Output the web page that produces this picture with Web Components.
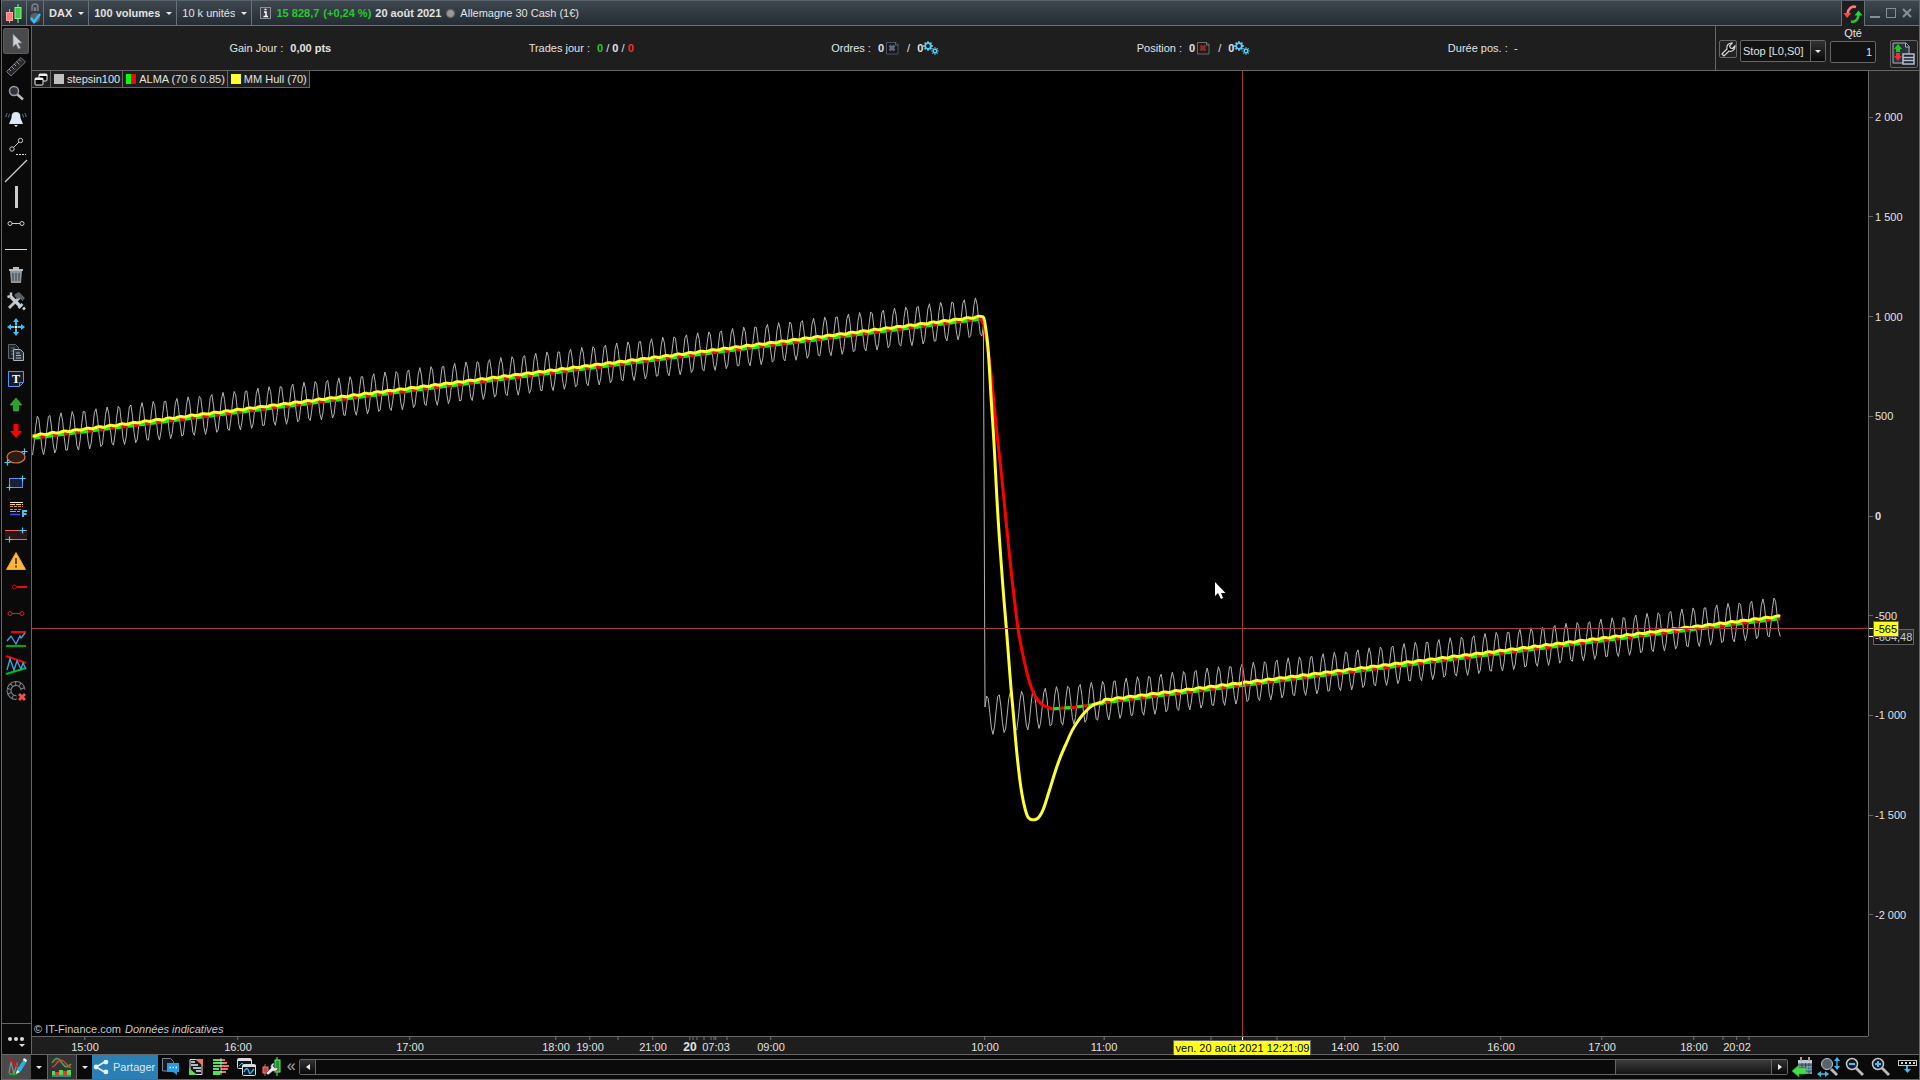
<!DOCTYPE html>
<html lang="fr">
<head>
<meta charset="utf-8">
<title>DAX - 100 volumes</title>
<style>
    html, body {
        margin: 0;
        height: 100%;
        background: #000;
    }

    body {
        font: 11px/14px "Liberation Sans", Arial, sans-serif;
        color: #e2e2e2;
        --line: #666;
        --panel: #1e1e1e;
        --rail: #0a0a0a;
    }
</style>
</head>
<body>
<trading-window>
    <title-bar slot="title"></title-bar>
    <tool-rail slot="rail"></tool-rail>
    <info-bar slot="info"></info-bar>
    <price-chart slot="chart">
        <legend-item colors="#c0c0c0">stepsin100</legend-item>
        <legend-item colors="#00ff00,#ff0000">ALMA (70 6 0.85)</legend-item>
        <legend-item colors="#ffff33">MM Hull (70)</legend-item>
    </price-chart>
    <price-axis slot="prices"></price-axis>
    <time-axis slot="times"></time-axis>
    <bottom-bar slot="bottom"></bottom-bar>
</trading-window>

<script>
// Icons, drawn on a 26x26 box unless a viewBox is given
const plus = (x, y) => `<path d="M${x - 3} ${y}h6M${x} ${y - 3}v6" stroke="#4cf" stroke-width="1.2"/>`;

const gearTeeth = (x, y, r, n) => {
    let d = '';
    for (let i = 0; i < n; i++) {
        const a = i * 2 * Math.PI / n;
        d += `M${x + r * Math.cos(a)} ${y + r * Math.sin(a)}L${x + (r + 2) * Math.cos(a)} ${y + (r + 2) * Math.sin(a)}`;
    }
    return `<circle cx="${x}" cy="${y}" r="${r}"/><path d="${d}"/>`;
};

const ICONS = {
    candles: `<path d="M5.500 8v14" stroke="#ff8f8f"/><rect x="2.500" y="11.500" width="6" height="8" fill="#f87c7c" stroke="#ffa0a0"/>
        <path d="M14 3v19" stroke="#7f7"/><rect x="11" y="6.500" width="6" height="11" fill="#3fc94b" stroke="#8bf58b"/>`,
    link: `<path d="M5 10V6a3 3 0 0 1 6 0v4M7.500 10V7h1v3" stroke="#7b8288" stroke-width="1.500"/>
        <circle cx="8" cy="17" r="5" fill="#59636b"/><path d="M4 17l3 4 6-8" stroke="#35bfff" stroke-width="2.400"/>`,
    info: `<rect x="1.500" y="1.500" width="10" height="11" fill="#3e4045" stroke="#8b8e94"/><path d="M5 6h2v4.500M4.500 10.500h4.500M5.500 3.500h2" stroke="#fff" stroke-width="1.500"/>`,
    refresh: `<path d="M13 3C8.500 1.500 5 5 4.500 10" stroke="#ff7777" stroke-width="2.600"/><path d="M.5 9h8L4 14z" fill="#f44"/>
        <path d="M8 17.500c4.500 1 7.500-2 7.500-7" stroke="#28c33c" stroke-width="2.600"/><path d="M11.500 11.500h8l-4-5z" fill="#1bdd31"/>`,
    min: `<path d="M1 10h10" stroke="#888e95" stroke-width="2"/>`,
    max: `<rect x="1.500" y="1.500" width="9" height="9" stroke="#888e95"/>`,
    close: `<path d="M2 2l8 8M10 2l-8 8" stroke="#888e95" stroke-width="2"/>`,
    caret: `<path d="M0 0h6l-3 3z" fill="#e8e8e8"/>`,
    cancel: `<path d="M.5 .5h9.500l2 2v9.500H.5z" fill="#15181c" stroke="#4b535e"/><path d="M9.500 .5v2.500h3" stroke="#606870"/><path d="M3.500 3.500l5 5M8.500 3.500l-5 5" stroke="#626a76" stroke-width="2.600"/>`,
    cancelRed: `<path d="M.5 .5h9.500l2 2v9.500H.5z" fill="#201a1a" stroke="#6a6a6a"/><path d="M9.500 .5v2.500h3" stroke="#777"/><path d="M3.500 3.500l5 5M8.500 3.500l-5 5" stroke="#8c2a2a" stroke-width="2.600"/>`,
    gears: `<g stroke="#5cc8f2" stroke-width="1.800">${gearTeeth(5, 5, 2.8, 8)}</g><g stroke="#5cc8f2" stroke-width="1.200">${gearTeeth(12, 10, 1.7, 8)}</g>`,
    wrench: `<path d="M2 13l5-5C6 4 9 2 12 2L9.500 5l1 2 2 .5L15 5c0 4-3 6-6 5l-5 5z" fill="#080808" stroke="#ddd" stroke-width="1.200"/>`,
    orders: `<path d="M1 1h13l3 3v17H1z" fill="#2b333d" stroke="#aab5c2"/><path d="M13.500 1v4h4" fill="#141a20" stroke="#aab5c2"/>
        <path d="M6 2l4 5H8v3H4V7H2z" fill="#1ec71e"/><path d="M6 19l4-5H8v-3H4v3H2z" fill="#f03030"/>
        <path d="M11 12h11v10H11z" fill="#1c2630" stroke="#b5c0cc" stroke-width="1.500"/><path d="M11 15.500h11M11 18.500h11" stroke="#b5c0cc" stroke-width="1.500"/>`,
    windows: `<rect x="5" y="1" width="8" height="7" rx="1" fill="#000" stroke="#eee"/><path d="M5 2h8" stroke="#eee" stroke-width="2"/>
        <rect x="1" y="5" width="8" height="7" rx="1" fill="#000" stroke="#eee"/><path d="M1 6h8" stroke="#eee" stroke-width="2"/>`,

    cursor: `<path d="M10 6v13l3-3 2.500 5 2-1-2.500-5h4z" fill="#ccd3d8" stroke="#777f86" stroke-width=".8"/>`,
    ruler: `<path d="M3.500 17.500L18 3.500l4.500 4.500L8 22z" fill="#24262a" stroke="#777b82"/><path d="M6 15l2 2M8.500 12.500l3 3M11 10l2 2M13.500 7.500l3 3M16 5.500l2 2" stroke="#999"/>`,
    search: `<circle cx="11" cy="11" r="4.500" fill="#30343a" stroke="#9aa0a6" stroke-width="1.500"/><path d="M14.500 14.500l5.500 5" stroke="#bbb" stroke-width="2.500"/>`,
    bell: `<path d="M13 6c-4 0-4.500 3-4.500 6L6 18h14l-2.500-6c0-3-.5-6-4.500-6zM11 19h4l-2 2z" fill="#dfe9f5"/><path d="M7 8c-1 1-1.500 2-1.500 3.500M4.500 7C3.500 8 3 9 3 11M19 8c1 1 1.500 2 1.500 3.500M21.500 7c1 1 1.500 2 1.500 4" stroke="#6b8598"/>`,
    segment: `<circle cx="9" cy="17" r="2.200" stroke="#ccc"/><circle cx="17.500" cy="8.500" r="2.200" stroke="#ccc"/><path d="M10.500 15.500l5.500-5.500" stroke="#ccc"/><path d="M13 22.500h10" stroke="#ddd" stroke-dasharray="2 1"/>`,
    line: `<path d="M2 24L24 2" stroke="#ccc" stroke-width="1.200"/>`,
    vbar: `<path d="M13.500 2v22" stroke="#ccc" stroke-width="3"/>`,
    hseg: `<circle cx="7" cy="13.500" r="2" stroke="#ccc"/><circle cx="19" cy="13.500" r="2" stroke="#ccc"/><path d="M9 13.500h8" stroke="#ccc"/>`,
    hline: `<path d="M2 13.500h22" stroke="#ddd"/>`,
    trash: `<path d="M7 9h12l-1 12H8z" fill="#8d969c"/><path d="M6 8h14M10 6h6" stroke="#b6bec4" stroke-width="2"/><path d="M10 11v8M13 11v8M16 11v8" stroke="#4a5055" stroke-width="1.300"/>`,
    tools: `<path d="M6 20l11-11" stroke="#b9c0c6" stroke-width="3"/><path d="M12 6l4-2 6 6-2.500 3-3-3-2 1-3-3z" fill="#586068"/><path d="M8 9l10 10" stroke="#c4ccd2" stroke-width="3.500"/><path d="M8 4.500v3.500l-3.500 1M15.500 20l4-4M20 21.500l2-2" stroke="#c4ccd2" stroke-width="2.500"/>`,
    move: `<path d="M13 4l3 4h-2v3h-2V8h-2zM13 22l3-4h-2v-3h-2v3h-2zM4 13l4-3v2h3v2H8v2zM22 13l-4-3v2h-3v2h3v2z" fill="#36c4f5"/><circle cx="13" cy="13" r="1.500" fill="#fff"/>`,
    copy: `<path d="M5.500 4.500h7l3 3v11h-10z" fill="#20252b" stroke="#5f6770"/><path d="M8 8h4M8 11h3M8 14h3" stroke="#6a727a"/><path d="M10.500 9.500h7l3 3v8h-10z" fill="#2c343e" stroke="#aab4bd"/><path d="M13 13h4M13 15.500h5M13 18h5" stroke="#aab4bd"/>`,
    text: `<path d="M5.500 5.500h15v11l-4 4h-11zM16.500 20v-3.500H20" fill="#171c26" stroke="#5f92ff"/><text x="13" y="17" text-anchor="middle" font-family="Liberation Serif, serif" font-size="12" font-weight="bold" fill="#fff">T</text>`,
    up: `<path d="M13 6l6 7h-3.500v6h-5v-6H7z" fill="#29a329" stroke="#45bd45" stroke-width=".6"/>`,
    down: `<path d="M13 20l6-7h-3.500V6h-5v7H7z" fill="#f00"/>`,
    ellipse: `<ellipse cx="13" cy="13" rx="9" ry="6" fill="#2e1c14" stroke="#dc7748" stroke-width="1.200"/>${plus(4.5, 18.5)}${plus(21.5, 7.5)}`,
    rect: `<rect x="6.500" y="8.500" width="13" height="9" fill="#1a2038" stroke="#6a8cf0"/>${plus(6.5, 17.5)}${plus(19.5, 8.5)}`,
    fibo: `<path d="M7 6.500h13" stroke="#eee"/><path d="M7 8.500h13" stroke="#ffe13c" stroke-dasharray="5 1"/><path d="M7 10.500h13M7 13.500h12" stroke="#e88234" stroke-dasharray="3 1"/><path d="M7 15.500h10" stroke="#aaa" stroke-dasharray="6 1"/><path d="M7 18.500h10" stroke="#3b4cff" stroke-width="1.500"/><path d="M20 21v-6h4M20 18h3.500" stroke="#4cf" stroke-width="1.800"/>`,
    channel: `<path d="M2 8.500h22v9H2z" fill="#2b1717"/><path d="M2 8.500h22M2 17.500h22" stroke="#e96565"/>${plus(6.5, 17.5)}${plus(19.5, 8.5)}`,
    warn: `<path d="M13 4.500l9.500 17h-19z" fill="#ffb837" stroke="#f7a61b" stroke-linejoin="round"/><path d="M13 10v6M13 17.500v2" stroke="#6a4200" stroke-width="2"/>`,
    ray: `<circle cx="11.500" cy="13" r="2" stroke="#d00"/><path d="M14 13h10" stroke="#f00" stroke-width="2"/>`,
    redseg: `<circle cx="7" cy="13.500" r="2" stroke="#d22"/><circle cx="19" cy="13.500" r="2" stroke="#d22"/><path d="M9 13.500h8" stroke="#d22"/>`,
    support: `<path d="M8 6h15" stroke="#f00" stroke-width="2"/><path d="M3 20h20" stroke="#0a0" stroke-width="2"/><path d="M4 15l4-5 5 8 4-8 1 2 4-5" stroke="#3cabe6" stroke-width="1.300"/>`,
    wedge: `<path d="M3 4l20 7" stroke="#f00" stroke-width="2"/><path d="M3 22l20-6" stroke="#0b2" stroke-width="2"/><path d="M4 18l3-11 4 11 3-9 4 8 2-6 3 6" stroke="#3cabe6" stroke-width="1.300"/>`,
    magnet: `<path d="M13.500 19.500A7 7 0 1 1 20 12" stroke="#80858a" stroke-width="5"/><path d="M13.500 19.500A7 7 0 1 1 20 12" stroke="#101214" stroke-width="3" stroke-dasharray="3.500 1"/><path d="M16 16l6 6M22 16l-6 6" stroke="#f35050" stroke-width="2.800"/>`,
    dots: `<circle cx="7" cy="13" r="2" fill="#ddd"/><circle cx="13" cy="13" r="2" fill="#ddd"/><circle cx="19" cy="13" r="2" fill="#ddd"/><path d="M16 18h6l-3 3z" fill="#ddd"/>`,

    draw: `<path d="M5 19L7 8l3 12 3-10 2 8" stroke="#8b8b8b" stroke-width="1.200"/><path d="M5 4l9 9" stroke="#f00" stroke-width="1.500"/><path d="M5 20h8" stroke="#0c0" stroke-width="1.500"/><path d="M12 19l2-5 6-9 3 2-6 10z" fill="#25b4ec"/><path d="M19 6l3 2 1-2-3-2zM12 20l1-4 3 2z" fill="#fff"/>`,
    indicators: `<path d="M3 9c4-7 7-5 10 0s6 5 9 1" fill="#663030" stroke="#31b34c" stroke-width="1.500"/><path d="M3 13c4 0 5-7 9-7s6 7 10 8" stroke="#e44" stroke-width="1.200"/><path d="M3 21v-4h3v4M10 21v-5h4v5M18 21v-5h4v5" fill="#4be04b"/><path d="M6 21v-3h4v3M14 21v-4h4v4" fill="#e33"/><path d="M3 22h19" stroke="#3bdcf5"/>`,
    share: `<path d="M18 6L6 13l12 7" stroke="#e8f0f5" stroke-width="2"/><circle cx="18" cy="7" r="3" fill="#e8f0f5"/><circle cx="6" cy="13" r="3" fill="#e8f0f5"/><circle cx="18" cy="19" r="3" fill="#e8f0f5"/>`,
    chat: `<path d="M4.500 4.500h8l3 3V17h-11z" fill="#161b22" stroke="#7b8693"/><path d="M9 9h12v9h-2v3l-4-3H9z" fill="#269be6"/><path d="M11.500 13.500h1.500M14.500 13.500h1.500M17.500 13.500h1.500" stroke="#fff" stroke-width="1.500"/>`,
    report: `<path d="M7 5.500h12v15H7z" fill="#16191c" stroke="#ddd"/><path d="M12 5h8v7z" fill="#f07474"/><path d="M6 14v7h8z" fill="#62d962"/><path d="M8 8h4M8 11h7M10 14h8M13 17h5" stroke="#eee" stroke-width="1.500"/>`,
    depth: `<path d="M5 6h8M5 9h11M5 12h8M5 15h6M5 18h9M5 20h7" stroke="#53df5a" stroke-width="2"/><path d="M13 6h4M16 9h3M13 12h8M13 15h7M14 18h4" stroke="#f26e6e" stroke-width="2"/><path d="M13 4v17" stroke="#eee" stroke-width=".7"/>`,
    panels: `<rect x="4.500" y="4.500" width="14" height="10" rx="1" fill="#101820" stroke="#ddd"/><path d="M5 6h13" stroke="#ddd" stroke-width="2"/><path d="M6 12l3-3 3 3" stroke="#3bbdf0"/><rect x="9.500" y="10.500" width="13" height="11" rx="1" fill="#101820" stroke="#ddd"/><path d="M10 12h13" stroke="#ddd" stroke-width="2"/><path d="M11 18c2-5 4-4 5 0s3-1 5-3" stroke="#3bbdf0" stroke-width="1.300"/>`,
    backtest: `<path d="M7 10v12" stroke="#d55"/><rect x="5" y="13" width="5" height="6" fill="#c44" stroke="#f77"/><path d="M19 3v19" stroke="#6e6"/><rect x="17" y="6" width="5" height="12" fill="#1c9c2e" stroke="#6e6"/><path d="M8 19l5-5c-1-3 1-5 4-5l-2 3 2 2 3-1c0 3-2 5-5 4l-5 4z" fill="#e8e8e8" stroke="#333" stroke-width=".6"/>`,
    left: `<path d="M7 0v6L3 3z" fill="#eee"/>`,
    right: `<path d="M3 0v6l4-3z" fill="#eee"/>`,
    calendar: `<path d="M8 6h14v14H8z" fill="#8394a8"/><path d="M8 6h14v3H8z" fill="#c0cad6"/><path d="M11 3v4M19 3v4" stroke="#b99" stroke-width="2"/><path d="M8 11h14M8 14h14M8 17h14M12 9v11M15.500 9v11M19 9v11" stroke="#37424f"/><path d="M17 13h3v3h-3z" stroke="#3cf"/><path d="M2 17l7-6v3h7v6H9v3z" fill="#46dc46" stroke="#2db12d" stroke-width=".6"/>`,
    fit: `<circle cx="11" cy="10" r="5.500" fill="#59636c" stroke="#c4cace"/><path d="M15 15l6 6" stroke="#bbb" stroke-width="2.800"/><path d="M21 5v9M3 20h8" stroke="#38bdf0" stroke-width="1.300"/><path d="M18 7l3-4 3 4zM18 12l3 4 3-4zM5 17l-4 3 4 3zM9 17l4 3-4 3z" fill="#38bdf0"/>`,
    zoomOut: `<circle cx="10" cy="10" r="5.500" fill="#101820" stroke="#c4cace" stroke-width="1.500"/><path d="M14 14l7 7" stroke="#bbb" stroke-width="2.800"/><path d="M7 10h6" stroke="#38c4ff" stroke-width="2"/>`,
    zoomIn: `<circle cx="10" cy="10" r="5.500" fill="#101820" stroke="#c4cace" stroke-width="1.500"/><path d="M14 14l7 7" stroke="#bbb" stroke-width="2.800"/><path d="M7 10h6M10 7v6" stroke="#38c4ff" stroke-width="2"/>`,
    dock: `<rect x="4.500" y="6.500" width="18" height="5" stroke="#ccc"/><path d="M7 9h2M11 9h2M15 9h2M19 9h2" stroke="#ddd" stroke-width="2"/><path d="M13 12v4" stroke="#38bdf0" stroke-width="2"/><path d="M10 15h7l-3.500 4z" fill="#38bdf0"/>`
};

const icon = (name, w = 26, h = w) =>
    `<svg width="${w}" height="${h}" viewBox="0 0 ${w} ${h}" fill="none" aria-hidden="true">${ICONS[name]}</svg>`;

const define = (name, render) => customElements.define(name, class extends HTMLElement {
    constructor() {
        super();
        this.attachShadow({ mode: 'open' });
    }

    connectedCallback() {
        this.shadowRoot.innerHTML = render(this);
    }
});

const BASE = `
    :host, * { box-sizing: border-box; }
    svg { display: block; flex: none; }
    button, select, input { font: inherit; color: inherit; margin: 0; padding: 0; border: 0; background: none; border-radius: 0; }
    select { appearance: none; field-sizing: content; outline: none; }
    option { background: #1e1e1e; }
    button { display: flex; align-items: center; justify-content: center; }
`;

define('trading-window', () => `
    <style>${BASE}
        :host {
            display: grid;
            min-height: 100vh;
            margin-left: 1px;
            border: 1px solid #666;
            border-top-color: #59636b;
            grid-template: auto auto 1fr auto auto / auto 1fr auto;
            grid-template-areas:
                "title title title"
                "rail info info"
                "rail chart prices"
                "rail times corner"
                "bottom bottom bottom";
        }
        slot { display: grid; }
        slot[name=title] { grid-area: title; }
        slot[name=rail] { grid-area: rail; }
        slot[name=info] { grid-area: info; }
        slot[name=chart] { grid-area: chart; }
        slot[name=prices] { grid-area: prices; }
        slot[name=times] { grid-area: times; }
        slot[name=bottom] { grid-area: bottom; min-width: 0; }
        .corner { grid-area: corner; background: var(--panel); }
    </style>
    <slot name="title"></slot>
    <slot name="rail"></slot>
    <slot name="info"></slot>
    <slot name="chart"></slot>
    <slot name="prices"></slot>
    <slot name="times"></slot>
    <div class="corner"></div>
    <slot name="bottom"></slot>
`);

define('menu-select', el => `
    <style>${BASE}
        :host { display: grid; align-items: center; border-right: 1px solid #68727b; }
        select, svg { grid-area: 1 / 1; }
        select { height: 24px; padding: 0 16px 0 5px; }
        svg { justify-self: end; margin-right: 4px; pointer-events: none; }
    </style>
    <select aria-label="${el.getAttribute('label')}"><option>${el.getAttribute('value')}</option></select>
    ${icon('caret', 6, 3)}
`);

define('title-bar', () => `
    <style>${BASE}
        :host {
            display: flex;
            height: 25px;
            background: linear-gradient(#3e474f, #252c33);
            border-bottom: 1px solid #68727b;
        }
        .cell { display: flex; align-items: center; border-right: 1px solid #68727b; }
        .logo { width: 25px; justify-content: center; }
        .link { width: 17px; }
        .bold { font-weight: bold; }
        .quote { display: flex; align-items: center; gap: 4px; padding-left: 7px; }
        .up { color: #25c92b; font-weight: bold; }
        .dot { width: 9px; height: 9px; margin: 0 1px; border-radius: 50%; background: #999; border: 1px solid #666; }
        .refresh { width: 24px; height: 25px; margin-left: auto; background: var(--panel); border: solid #68727b; border-width: 0 1px; }
        .wm { display: flex; align-items: center; gap: 4px; padding: 0 6px 0 4px; }
    </style>
    <div class="cell logo">${icon('candles', 20, 24)}</div>
    <div class="cell link">${icon('link', 16, 24)}</div>
    <menu-select class="bold" label="Valeur" value="DAX"></menu-select>
    <menu-select class="bold" label="Unité de temps" value="100 volumes"></menu-select>
    <menu-select label="Historique" value="10 k unités"></menu-select>
    <div class="quote">
        ${icon('info', 13, 14)}
        <span class="up">15 828,7</span>
        <span class="up">(+0,24 %)</span>
        <span class="bold">20 août 2021</span>
        <span class="dot"></span>
        <span>Allemagne 30 Cash (1€)</span>
    </div>
    <button class="refresh" aria-label="Actualiser">${icon('refresh', 20, 20)}</button>
    <div class="wm">
        <button aria-label="Réduire">${icon('min', 12)}</button>
        <button aria-label="Agrandir">${icon('max', 12)}</button>
        <button aria-label="Fermer">${icon('close', 12)}</button>
    </div>
`);

define('info-bar', () => `
    <style>${BASE}
        :host { display: flex; height: 45px; background: var(--panel); border-bottom: 1px solid var(--line); }
        .stats { flex: 1; display: flex; align-items: center; justify-content: space-evenly; }
        .stat { display: flex; align-items: center; gap: 4px; white-space: pre; }
        b { display: inline-flex; align-items: center; }
        .green { color: #25c92b; }
        .red { color: #ff2b2b; }
        .x { margin: 0 4px 0 -2px; }
        .g { margin-left: -4px; }
        .order { display: flex; align-items: flex-start; padding: 0 1px 0 3px; border-left: 1px solid var(--line); }
        .tool, .combo, .big { margin-top: 14px; border: 1px solid #666; border-radius: 2px; background: #222; }
        .tool { width: 18px; height: 18px; }
        .combo { display: grid; width: 86px; height: 22px; margin-left: 3px; margin-right: 4px; background: #121212; align-items: center; }
        .combo > * { grid-area: 1 / 1; }
        .combo select { height: 20px; padding-left: 2px; }
        .arrow { justify-self: end; display: grid; place-items: center; width: 15px; height: 20px; border-left: 1px solid #666; background: linear-gradient(#333, #080808); pointer-events: none; }
        .qty { display: flex; flex-direction: column; width: 46px; text-align: center; }
        .qty label { line-height: 15px; }
        .qty input { width: 100%; height: 22px; padding-right: 3px; border: 1px solid #666; border-radius: 2px; background: #121212; text-align: right; }
        .big { width: 28px; height: 28px; margin-left: 14px; }
    </style>
    <div class="stats">
        <div class="stat">Gain Jour : <b>0,00 pts</b></div>
        <div class="stat">Trades jour : <span><b class="green">0</b> / <b>0</b> / <b class="red">0</b></span></div>
        <div class="stat">Ordres : <b>0</b><button class="x" aria-label="Annuler les ordres">${icon('cancel', 13)}</button>/ <b>0</b><button class="g" aria-label="Ordres automatiques">${icon('gears', 16, 14)}</button></div>
        <div class="stat">Position : <b>0</b><button class="x" aria-label="Fermer la position">${icon('cancelRed', 13)}</button>/ <b>0</b><button class="g" aria-label="Positions automatiques">${icon('gears', 16, 14)}</button></div>
        <div class="stat">Durée pos. :  -</div>
    </div>
    <div class="order">
        <button class="tool" aria-label="Configurer">${icon('wrench', 17)}</button>
        <div class="combo">
            <select aria-label="Type de stop"><option>Stop [L0,S0]</option></select>
            <span class="arrow">${icon('caret', 6, 3)}</span>
        </div>
        <div class="qty">
            <label for="qty">Qté</label>
            <input id="qty" value="1">
        </div>
        <button class="big" aria-label="Carnet d'ordres">${icon('orders', 24)}</button>
    </div>
`);

const TOOLS = [
    ['cursor', 'Curseur'], ['ruler', 'Règle'], ['search', 'Loupe'], ['bell', 'Alerte'], ['segment', 'Segment'],
    ['line', 'Droite'], ['vbar', 'Verticale'], ['hseg', 'Segment horizontal'], ['hline', 'Horizontale'],
    ['trash', 'Supprimer'], ['tools', 'Propriétés'], ['move', 'Déplacer'], ['copy', 'Dupliquer'], ['text', 'Texte'],
    ['up', 'Flèche haut'], ['down', 'Flèche bas'], ['ellipse', 'Ellipse'], ['rect', 'Rectangle'], ['fibo', 'Fibonacci'],
    ['channel', 'Canal'], ['warn', 'Avertissement'], ['ray', 'Demi-droite'], ['redseg', 'Segment rouge'],
    ['support', 'Supports'], ['wedge', 'Triangles'], ['magnet', 'Aimant']
];

define('tool-rail', () => `
    <style>${BASE}
        :host { display: flex; flex-direction: column; width: 30px; padding-top: 2px; background: var(--rail); border-right: 1px solid var(--line); }
        button { height: 26px; padding-right: 1px; }
        .on { width: 26px; margin-left: 1px; padding: 0; background: #4a4a4a; border: 1px solid #5c5c5c; border-radius: 2px; }
        .more { height: 31px; margin-top: auto; border-top: 1px solid var(--line); }
    </style>
    ${TOOLS.map(([name, label], i) => `<button${i ? '' : ' class="on"'} aria-label="${label}">${icon(name)}</button>`).join('')}
    <button class="more" aria-label="Plus d'outils">${icon('dots')}</button>
`);

define('legend-item', el => {
    const colors = el.getAttribute('colors').split(',');
    return `
    <style>
        :host { display: flex; align-items: center; gap: 3px; padding: 0 2px 0 3px; border-right: 1px solid var(--line); background: var(--panel); }
        .swatch { display: flex; width: 10px; height: 10px; }
        i { flex: 1; }
    </style>
    <span class="swatch">${colors.map(c => `<i style="background:${c}"></i>`).join('')}</span>
    <slot></slot>`;
});

// Plot space: 1836 x 965, one bar every 1.5875 units
const PLOT_W = 1836;
const PLOT_H = 965;
const BAR = 1.5875;
const PERIOD = 11.578;
const STEP = 600;
const LAST = 1101;
const priceY = v => 445 - v * 0.1994;
const trend = i => i < STEP ? 400 + i : (i - STEP) * 0.988 - 1000;
const wave = x => Math.cos((x - 5.7) / PERIOD * 2 * Math.PI);

const HULL_DROP = [
    [951.7, 246], [953.3, 253.6], [956.3, 277], [959, 327], [962, 370], [965.3, 437], [969.3, 495], [972, 530],
    [974.7, 561], [977, 592], [979.2, 620], [981.7, 646], [984, 674], [986.5, 698], [988.7, 716], [991.5, 732],
    [995, 745], [998, 748.500], [1001.7, 749], [1005, 748], [1007.3, 746], [1011.3, 739], [1016, 724],
    [1020, 711], [1024, 698], [1029, 684], [1035, 671], [1040, 659], [1048, 647], [1055, 638.6], [1062, 633],
    [1071, 631]
];
const ALMA_DROP = [
    [949, 248], [952.3, 255], [956, 279], [960, 311], [964.3, 357], [969.7, 405], [975.3, 463], [979, 499],
    [982.3, 528], [986.3, 561], [990.7, 583], [995, 603], [1001.3, 623], [1008.7, 633], [1014.7, 636], [1021, 638]
];
const ALMA_BASE = [[1020, 638], [1031, 637], [1041, 636.5], [1051, 635], [1063, 633.5], [1072, 632.500]];

const between = (pts, x) => {
    const k = pts.findIndex(p => p[0] >= x);
    const [a, b] = [pts[k - 1], pts[k]];
    return a[1] + (b[1] - a[1]) * (x - a[0]) / (b[0] - a[0]);
};

const point = p => p[0].toFixed(2) + ' ' + p[1].toFixed(2);
const polyline = pts => 'M' + pts.map(point).join('L');

// Quadratic curve through the midpoints
function smooth(pts) {
    let d = 'M' + point(pts[0]);
    for (let i = 1; i < pts.length - 1; i++) {
        const [a, b] = [pts[i], pts[i + 1]];
        d += 'Q' + point(a) + ' ' + point([(a[0] + b[0]) / 2, (a[1] + b[1]) / 2]);
    }
    return d + 'L' + point(pts.at(-1));
}

function buildSeries() {
    const price = [], hull = [], alma = [];
    let green = '', pen = false;
    for (let i = 0; i <= LAST; i++) {
        const x = 0.5 + i * BAR;
        const y = priceY(trend(i));
        price.push([x, y - 19.94 * wave(x)]);

        if (x < 951 || x > 1071) hull.push([x, y - 0.6 + 0.6 * Math.sin(x / PERIOD * 2 * Math.PI)]);
        else if (hull.at(-1)[0] < 951) hull.push(...HULL_DROP);

        let ay = null;
        if (x < 949 || x > 1071) ay = y + 2;
        else if (x > 1021) ay = between(ALMA_BASE, x);
        else if (alma.at(-1)[0] < 949) alma.push(...ALMA_DROP);
        if (ay !== null) alma.push([x, ay]);

        if (ay !== null && wave(x) > -0.6) {
            green += (pen ? 'L' : 'M') + point([x, ay]);
            pen = true;
        } else {
            pen = false;
        }
    }
    return { price: polyline(price), hull: smooth(hull), alma: smooth(alma), green };
}

define('price-chart', () => {
    const s = buildSeries();
    return `
    <style>${BASE}
        :host { display: grid; contain: size; background: #000; overflow: hidden; }
        .plot, .legend, .credit { grid-area: 1 / 1; }
        .plot { width: 100%; height: 100%; min-height: 0; }
        .legend { display: flex; place-self: start; height: 17px; border-bottom: 1px solid var(--line); }
        .legend button { width: 19px; background: var(--panel); border-right: 1px solid var(--line); }
        .credit { place-self: end start; padding-left: 2px; color: #ccc; }
        .credit i { margin-left: 1px; }
    </style>
    <svg class="plot" viewBox="0 0 ${PLOT_W} ${PLOT_H}" preserveAspectRatio="none" fill="none">
        <path d="${s.price}" stroke="#b4b4b4" stroke-width="1"/>
        <path d="${s.alma}" stroke="#ff0000" stroke-width="3" stroke-linejoin="round"/>
        <path d="${s.green}" stroke="#00ff00" stroke-width="3"/>
        <path d="${s.hull}" stroke="#ffff33" stroke-width="3" stroke-linejoin="round"/>
        <path d="M0 557.500H1836M1210.500 0V965" stroke="#a83a3a" stroke-width="1"/>
        <path d="M1183 511v14l3-3 3 6 2-1-2-5h4.500z" fill="#fff"/>
    </svg>
    <div class="legend">
        <button aria-label="Détacher">${icon('windows', 14, 13)}</button>
        <slot></slot>
    </div>
    <div class="credit">© IT-Finance.com <i>Données indicatives</i></div>`;
});

const PRICES = [2000, 1500, 1000, 500, 0, -500, -1000, -1500, -2000];
const formatPrice = v => String(v).replace(/(\d)(\d{3})$/, '$1 $2');
const atPrice = v => `top:${(priceY(v) / PLOT_H * 100).toFixed(3)}%`;

// Labels lie on the scale at the height of their value
define('price-axis', () => `
    <style>${BASE}
        :host { display: block; position: relative; width: 51px; background: var(--panel); border-left: 1px solid var(--line); }
        .mark { position: absolute; left: 0; display: flex; align-items: center; gap: 2px; transform: translateY(-50%); white-space: nowrap; }
        .mark::before { content: ""; width: 4px; height: 1px; background: var(--line); }
        .zero { font-weight: bold; }
        .tag { gap: 0; }
        .tag::before { background: #eee; }
        .tag span { padding: 0 1px; border: 1px solid #666; background: linear-gradient(#333, #111); color: #ccc; }
        .cross span { background: #ffff19; color: #000; }
    </style>
    ${PRICES.map(v => `<div class="mark${v ? '' : ' zero'}" style="${atPrice(v)}">${formatPrice(v)}</div>`).join('')}
    <div class="mark tag" style="${atPrice(-604.48)}"><span>-604,48</span></div>
    <div class="mark tag cross" style="${atPrice(-565)}"><span>-565</span></div>
`);

const TIMES = [
    [53, '15:00'], [206, '16:00'], [378, '17:00'], [524, '18:00'], [558, '19:00'], [586], [621, '21:00'],
    [658, '20', 'day'], [661], [665], [672], [679], [682], [684, '07:03'], [695], [739, '09:00'], [953, '10:00'],
    [1072, '11:00'], [1179], [1245], [1313, '14:00'], [1353, '15:00'], [1469, '16:00'], [1570, '17:00'],
    [1662, '18:00'], [1691], [1705, '20:02'], [1717]
];

define('time-axis', () => `
    <style>${BASE}
        :host { display: block; position: relative; height: 18px; background: var(--panel); border-top: 1px solid var(--line); }
        .mark { position: absolute; top: 0; display: flex; flex-direction: column; align-items: center; transform: translateX(-50%); white-space: nowrap; }
        .mark::before { content: ""; width: 1px; height: 3px; background: #777; }
        .day { font-size: 12px; font-weight: bold; }
        .cross::before { background: #fff; }
        .cross span { padding: 0 1px; border: 1px solid #666; border-bottom: 0; background: #ffff19; color: #000; }
    </style>
    ${TIMES.map(([x, label = '', cls = '']) => `<div class="mark ${cls}" style="left:${(x / PLOT_W * 100).toFixed(3)}%">${label}</div>`).join('')}
    <div class="mark cross" style="left:${(1210.5 / PLOT_W * 100).toFixed(3)}%"><span>ven. 20 août 2021 12:21:09</span></div>
`);

define('bottom-bar', () => `
    <style>${BASE}
        :host { display: flex; height: 25px; background: var(--rail); border-top: 1px solid var(--line); }
        .draw { width: 29px; background: #4a4a4a; }
        .drop { width: 16px; }
        .ind { width: 30px; background: #333; border: solid var(--line); border-width: 0 1px; }
        .ind + .drop { width: 15px; }
        .share { gap: 3px; padding: 0 3px 0 2px; background: #2a7fb5; color: #dce8f0; }
        .share svg { margin-left: -2px; }
        .t { width: 25px; }
        .chev { width: 16px; font-size: 16px; color: #aaa; padding-bottom: 2px; }
        .scroll { flex: 1; display: flex; height: 16px; margin: 4px 2px 0 0; border: 1px solid var(--line); border-radius: 2px; }
        .scroll button { width: 15px; background: linear-gradient(#333, #080808); }
        .track { flex: 1; display: flex; justify-content: flex-end; border: solid var(--line); border-width: 0 1px; }
        .thumb { width: 10.7%; border-left: 1px solid var(--line); background: linear-gradient(#3c3c3c, #141414); }
        .r { width: 26px; }
        .end { display: flex; margin-right: -1px; }
    </style>
    <button class="draw" aria-label="Outils de dessin">${icon('draw')}</button>
    <button class="drop" aria-label="Options de dessin">${icon('caret', 6, 3)}</button>
    <button class="ind" aria-label="Indicateurs">${icon('indicators')}</button>
    <button class="drop" aria-label="Options des indicateurs">${icon('caret', 6, 3)}</button>
    <button class="share"><svg width="18" height="18" viewBox="1 2 22 22" fill="none" aria-hidden="true">${ICONS.share}</svg>Partager</button>
    <button class="t" aria-label="Messages">${icon('chat')}</button>
    <button class="t" aria-label="Rapport">${icon('report')}</button>
    <button class="t" aria-label="Carnet">${icon('depth')}</button>
    <button class="t" aria-label="Fenêtres">${icon('panels')}</button>
    <button class="t" aria-label="Backtest">${icon('backtest')}</button>
    <button class="chev" aria-label="Replier">«</button>
    <div class="scroll">
        <button aria-label="Reculer">${icon('left', 10, 6)}</button>
        <div class="track"><div class="thumb"></div></div>
        <button aria-label="Avancer">${icon('right', 10, 6)}</button>
    </div>
    <div class="end">
        <button class="r" aria-label="Aller à la date">${icon('calendar')}</button>
        <button class="r" aria-label="Ajuster">${icon('fit')}</button>
        <button class="r" aria-label="Zoom arrière">${icon('zoomOut')}</button>
        <button class="r" aria-label="Zoom avant">${icon('zoomIn')}</button>
        <button class="r" aria-label="Ancrer">${icon('dock')}</button>
    </div>
`);
</script>
</body>
</html>
